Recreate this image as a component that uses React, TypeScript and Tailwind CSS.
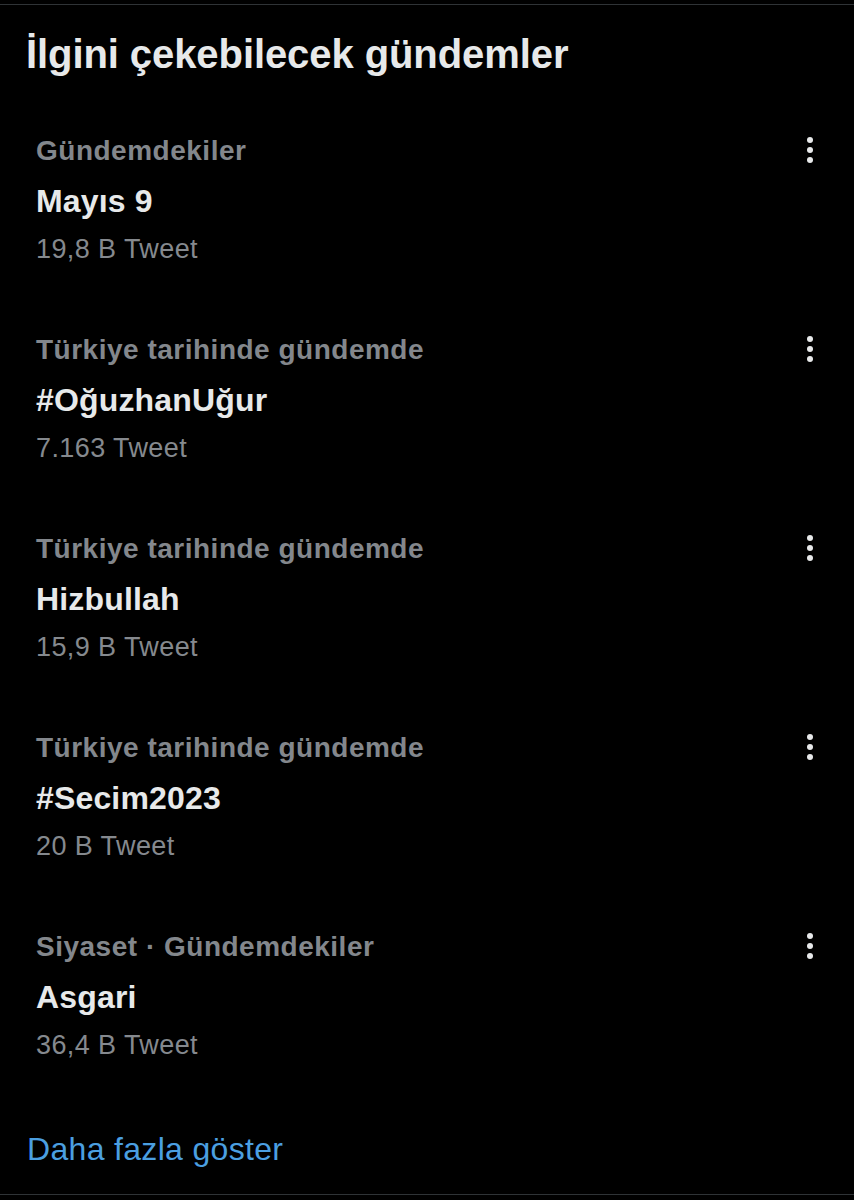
import React from "react";

const trends = [
  { category: "Gündemdekiler", title: "Mayıs 9", count: "19,8 B Tweet" },
  { category: "Türkiye tarihinde gündemde", title: "#OğuzhanUğur", count: "7.163 Tweet" },
  { category: "Türkiye tarihinde gündemde", title: "Hizbullah", count: "15,9 B Tweet" },
  { category: "Türkiye tarihinde gündemde", title: "#Secim2023", count: "20 B Tweet" },
  { category: "Siyaset · Gündemdekiler", title: "Asgari", count: "36,4 B Tweet" },
];

function MoreDots() {
  return (
    <div className="mt-[2px] flex flex-col items-center gap-[4px]">
      <span className="h-[6px] w-[6px] rounded-full bg-[#e7e9ea]" />
      <span className="h-[6px] w-[6px] rounded-full bg-[#e7e9ea]" />
      <span className="h-[6px] w-[6px] rounded-full bg-[#e7e9ea]" />
    </div>
  );
}

export default function App() {
  return (
    <div
      className="min-h-[1200px] w-[854px] bg-black pt-1"
      style={{ fontFamily: '"Liberation Sans", Arial, sans-serif' }}
    >
      <div className="flex min-h-[1191px] flex-col border-y border-[#2f3336]">
        <h2 className="pl-[26px] pt-[26px] text-[40px] font-bold leading-[46px] tracking-[-0.002em] text-[#e7e9ea]">
          İlgini çekebilecek gündemler
        </h2>

        <div className="mt-[58px] flex flex-col gap-[70px]">
          {trends.map((t, i) => (
            <div key={i} className="flex items-start justify-between pl-[36px] pr-[41px]">
              <div className="flex flex-col">
                <span className="text-[28px] font-bold leading-[32px] tracking-[0.018em] text-[#83878c]">
                  {t.category}
                </span>
                <span className="mt-[16px] text-[32px] font-bold leading-[36px] tracking-[0.005em] text-[#e7e9ea]">
                  {t.title}
                </span>
                <span className="mt-[15px] text-[27px] leading-[30px] tracking-[0.015em] text-[#85898e]">
                  {t.count}
                </span>
              </div>
              <MoreDots />
            </div>
          ))}
        </div>

        <a className="mt-[70px] pl-[27px] text-[32px] leading-[38px] tracking-[0.01em] text-[#4b9fe1]">
          Daha fazla göster
        </a>
      </div>
    </div>
  );
}
